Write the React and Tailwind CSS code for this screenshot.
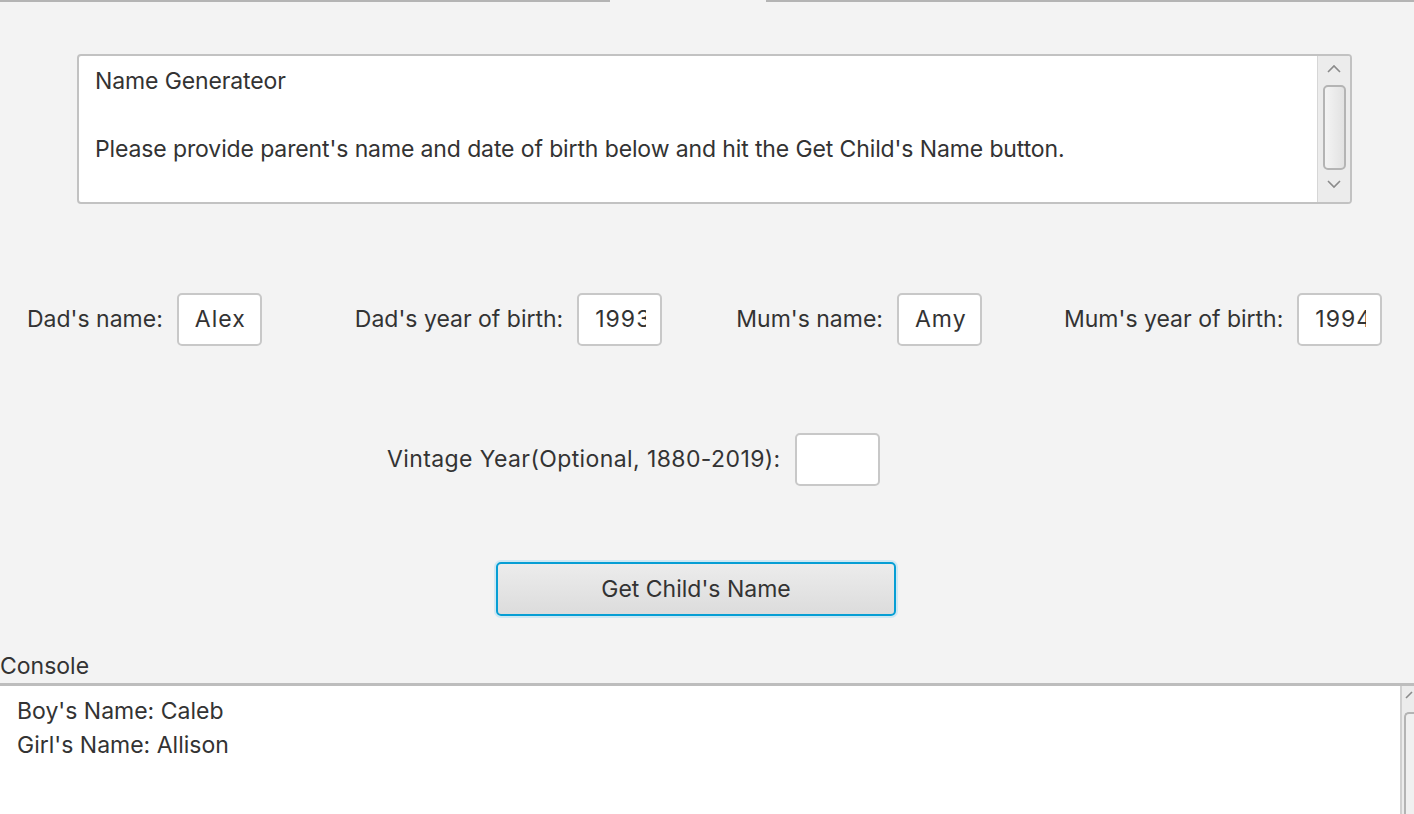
import React from 'react';

const font = { fontFamily: 'Inter, "Open Sans", sans-serif' };

function Field({ label, value, className = '', labelClass = '' }) {
  return (
    <div className={`flex items-center ${className}`}>
      <span className={`text-[23px] text-[#333] mr-[14px] ${labelClass}`}>{label}</span>
      <div className="w-[85px] h-[53px] bg-white border-2 border-[#c8c8c8] rounded-[5px] flex items-center pl-[16px] pr-[14px]">
        <div className="overflow-hidden w-full">
          <span className="text-[23px] text-[#333] whitespace-nowrap tracking-[1px]">{value}</span>
        </div>
      </div>
    </div>
  );
}

function ScrollBar() {
  return (
    <div className="w-[33px] h-full bg-[#ececec] border-l border-[#d6d6d6] flex flex-col items-center">
      <svg width="16" height="10" viewBox="0 0 16 10" className="mt-[8px]">
        <path d="M2 8 L8 2 L14 8" fill="none" stroke="#8a8a8a" strokeWidth="1.6" />
      </svg>
      <div className="mt-[11px] w-[23px] h-[85px] rounded-[5px] border-2 border-[#b4b4b4] bg-gradient-to-r from-[#f4f4f4] to-[#e2e2e2]" />
      <svg width="16" height="10" viewBox="0 0 16 10" className="mt-[9px]">
        <path d="M2 2 L8 8 L14 2" fill="none" stroke="#8a8a8a" strokeWidth="1.6" />
      </svg>
    </div>
  );
}

export default function App() {
  return (
    <div className="w-[1414px] h-[814px] bg-[#f3f3f3] overflow-hidden flex flex-col" style={font}>
      {/* Tab strip */}
      <div className="flex h-[2px]">
        <div className="w-[610px] bg-[#b4b4b4]" />
        <div className="w-[156px]" />
        <div className="flex-1 bg-[#b4b4b4]" />
      </div>

      {/* Intro text area */}
      <div className="mt-[52px] ml-[77px] w-[1275px] h-[150px] bg-white border-2 border-[#c2c2c2] rounded-[4px] flex overflow-hidden">
        <div className="flex-1 pl-[16px] pt-[8px] text-[23px] leading-[34px] text-[#333] tracking-[-0.12px]">
          <div>Name Generateor</div>
          <div>&nbsp;</div>
          <div>Please provide parent's name and date of birth below and hit the Get Child's Name button.</div>
        </div>
        <ScrollBar />
      </div>

      {/* Parents row */}
      <div className="mt-[89px] flex items-center pl-[27px]">
        <Field label="Dad's name:" value="Alex" />
        <Field label="Dad's year of birth:" value="1993" className="ml-[93px]" />
        <Field label="Mum's name:" value="Amy" className="ml-[74px]" />
        <Field label="Mum's year of birth:" value="1994" className="ml-[82px]" />
      </div>

      {/* Vintage row */}
      <div className="mt-[87px] flex items-center pl-[387px]">
        <Field label="Vintage Year(Optional, 1880-2019):" value="" labelClass="tracking-[0.4px]" />
      </div>

      {/* Button */}
      <div className="mt-[76px] pl-[496px]">
        <button className="w-[400px] h-[54px] rounded-[5px] border-2 border-[#069ed4] shadow-[0_0_0_2px_#cfe8f3] bg-gradient-to-b from-[#ececec] to-[#dcdcdc] text-[23px] text-[#333]">
          Get Child's Name
        </button>
      </div>

      {/* Console */}
      <div className="mt-[35px] text-[23px] text-[#333] leading-[30px]">Console</div>
      <div className="mt-[2px] flex-1 flex border-t-[3px] border-[#bdbdbd] bg-white">
        <div className="flex-1 pl-[17px] pt-[8px] text-[23px] leading-[34px] text-[#333]">
          <div>Boy's Name: Caleb</div>
          <div>Girl's Name: Allison</div>
        </div>
        <div className="w-[14px] bg-[#ececec] border-l-2 border-[#d0d0d0] flex flex-col items-end">
          <svg width="12" height="10" viewBox="0 0 12 10" className="mt-[4px]">
            <path d="M4 8 L10 2" fill="none" stroke="#8a8a8a" strokeWidth="1.6" />
          </svg>
          <div className="mt-[12px] w-[10px] flex-1 rounded-tl-[5px] border-l-2 border-t-2 border-[#b4b4b4] bg-[#f0f0f0]" />
        </div>
      </div>
    </div>
  );
}
